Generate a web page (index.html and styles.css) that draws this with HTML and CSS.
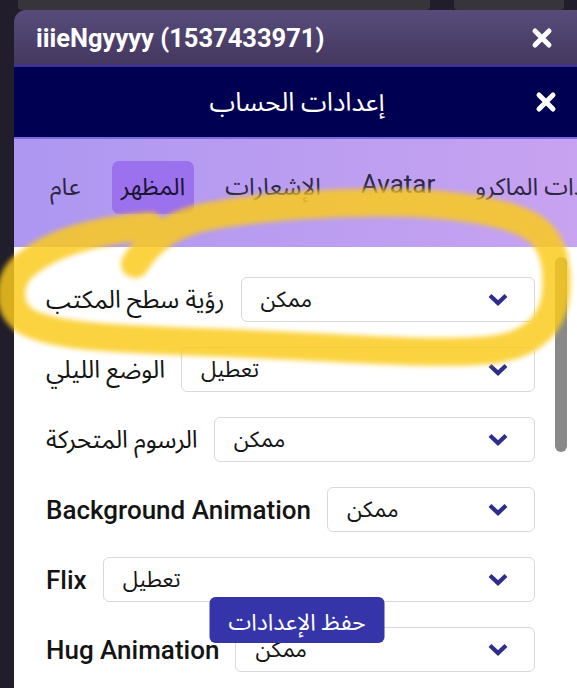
FILE: index.html
```html
<!DOCTYPE html>
<html lang="ar">
<head>
<meta charset="utf-8">
<title>إعدادات الحساب</title>
<link rel="stylesheet" href="styles.css">
</head>
<body>
  <div class="backdrop">
    <div class="pane"></div>
    <div class="pane small"></div>
  </div>
  <div class="window">
    <header class="win-header">
      <span class="win-title">iiieNgyyyy (1537433971)</span>
      <svg class="close" viewBox="0 0 22 22"><path d="M4 4 L18 18 M18 4 L4 18" stroke="#fff" stroke-width="5" stroke-linecap="round"/></svg>
    </header>
    <section class="dialog">
      <div class="dlg-header">
        <span></span>
        <h1 class="dlg-title">إعدادات الحساب</h1>
        <svg class="close close-end" viewBox="0 0 22 22"><path d="M4 4 L18 18 M18 4 L4 18" stroke="#fff" stroke-width="5" stroke-linecap="round"/></svg>
      </div>
      <nav class="tabs">
        <span class="tab">عام</span>
        <span class="tab active">المظهر</span>
        <span class="tab">الإشعارات</span>
        <span class="tab en">Avatar</span>
        <span class="tab">إعدادات الماكرو</span>
      </nav>
      <div class="content">
        <div class="row">
          <span class="label">رؤية سطح المكتب</span>
          <div class="select"><span>ممكن</span><svg class="chev" viewBox="0 0 22 13"><path d="M3 2.5 L11 10 L19 2.5" fill="none" stroke="#2d2d8c" stroke-width="4.2"/></svg></div>
        </div>
        <div class="row">
          <span class="label">الوضع الليلي</span>
          <div class="select"><span>تعطيل</span><svg class="chev" viewBox="0 0 22 13"><path d="M3 2.5 L11 10 L19 2.5" fill="none" stroke="#2d2d8c" stroke-width="4.2"/></svg></div>
        </div>
        <div class="row">
          <span class="label">الرسوم المتحركة</span>
          <div class="select"><span>ممكن</span><svg class="chev" viewBox="0 0 22 13"><path d="M3 2.5 L11 10 L19 2.5" fill="none" stroke="#2d2d8c" stroke-width="4.2"/></svg></div>
        </div>
        <div class="row">
          <span class="label en">Background Animation</span>
          <div class="select"><span>ممكن</span><svg class="chev" viewBox="0 0 22 13"><path d="M3 2.5 L11 10 L19 2.5" fill="none" stroke="#2d2d8c" stroke-width="4.2"/></svg></div>
        </div>
        <div class="row">
          <span class="label en">Flix</span>
          <div class="select"><span>تعطيل</span><svg class="chev" viewBox="0 0 22 13"><path d="M3 2.5 L11 10 L19 2.5" fill="none" stroke="#2d2d8c" stroke-width="4.2"/></svg></div>
        </div>
        <div class="row">
          <span class="label en">Hug Animation</span>
          <div class="select"><span>ممكن</span><svg class="chev" viewBox="0 0 22 13"><path d="M3 2.5 L11 10 L19 2.5" fill="none" stroke="#2d2d8c" stroke-width="4.2"/></svg></div>
        </div>
        <div class="scrollbar"></div>
        <button class="save">حفظ الإعدادات</button>
      </div>
    </section>
  </div>
  <svg class="scribble" viewBox="0 0 577 688">
    <path class="stroke" d="M135,264 C150,240 170,226 200,218 C260,206 340,201 413,203 C470,206 515,214 537,230 C554,244 558,268 556,292 C554,322 535,345 490,350 C430,356 320,346 200,342 C120,339 50,337 24,320 C6,306 8,280 24,266 C45,248 80,232 150,226" />
  </svg>
</body>
</html>
```

FILE: styles.css
```css
* { box-sizing: border-box; }
html, body { margin: 0; }
body {
  width: 577px;
  height: 688px;
  overflow: hidden;
  position: relative;
  background: #211d2a;
  font-family: Roboto, "Noto Sans Arabic", "DejaVu Sans", sans-serif;
}
.backdrop {
  display: flex;
  height: 10px;
  padding-left: 18px;
  gap: 24px;
}
.backdrop .pane {
  width: 412px;
  background: #37343c;
  border-radius: 0 0 4px 4px;
}
.backdrop .pane.small { width: 110px; }

.window {
  margin-left: 14px;
  width: 566px;
  height: 678px;
  border-top-left-radius: 12px;
  overflow: hidden;
  display: flex;
  flex-direction: column;
}
.win-header {
  flex: none;
  height: 55px;
  background: linear-gradient(#574b7b, #44385f);
  display: flex;
  align-items: center;
  justify-content: space-between;
  padding: 0 27px 0 22px;
}
.win-title {
  color: #fff;
  font-weight: 700;
  font-size: 25.5px;
}
.close { width: 22px; height: 22px; display: block; }

.dialog {
  flex: 1;
  display: flex;
  flex-direction: column;
  background: #fff;
}
.dlg-header {
  flex: none;
  height: 74px;
  background: #000052;
  border-top: 2px solid #3b2ea6;
  border-bottom: 2px solid #7c69de;
  display: grid;
  grid-template-columns: 1fr auto 1fr;
  align-items: center;
  padding: 0 23px;
}
.dlg-title {
  margin: 0;
  color: #fff;
  font-size: 26px;
  font-weight: 400;
}
.close-end { justify-self: end; }

.tabs {
  flex: none;
  height: 108px;
  background: linear-gradient(90deg, #ad97f1, #c8a3f1);
  display: flex;
  align-items: flex-start;
  gap: 22px;
  padding: 22px 0 0 27px;
  white-space: nowrap;
  overflow: hidden;
}
.tab {
  flex: none;
  height: 53px;
  padding: 0 9px;
  display: flex;
  align-items: center;
  font-size: 24px;
  color: #2c2742;
  border-radius: 7px;
}
.tab.en {
  font-size: 26px;
  padding-bottom: 8px;
}
.tab.active {
  background: #9c71ee;
  color: #1a1430;
}

.content {
  position: relative;
  flex: 1;
  padding: 30px 45px 0 32px;
}
.row {
  display: flex;
  align-items: center;
  gap: 16px;
  height: 45px;
  margin-bottom: 25px;
}
.label {
  font-size: 24.5px;
  color: #141414;
  white-space: nowrap;
}
.label.en {
  font-size: 26px;
  font-weight: 500;
}
.select {
  flex: 1;
  height: 45px;
  border: 1.5px solid #d9d9d9;
  border-radius: 6px;
  display: flex;
  align-items: center;
  justify-content: space-between;
  padding: 0 25px 0 19px;
  font-size: 22px;
  color: #141414;
}
.chev { width: 22px; height: 13px; display: block; }

.scrollbar {
  position: absolute;
  top: 10px;
  right: 13px;
  width: 12px;
  height: 195px;
  border-radius: 6px;
  background: #898989;
}
.save {
  position: absolute;
  top: 350px;
  left: 50%;
  transform: translateX(-50%);
  width: 175px;
  height: 46px;
  border: none;
  border-radius: 6px;
  background: #3535a9;
  color: #fff;
  font-family: inherit;
  font-size: 23px;
}

.scribble {
  position: absolute;
  top: 0;
  left: 0;
  width: 577px;
  height: 688px;
  pointer-events: none;
}
.scribble .stroke {
  fill: none;
  stroke: rgba(250, 202, 28, 0.84);
  stroke-width: 28;
  stroke-linecap: round;
  stroke-linejoin: round;
  filter: blur(2.5px);
}
```
